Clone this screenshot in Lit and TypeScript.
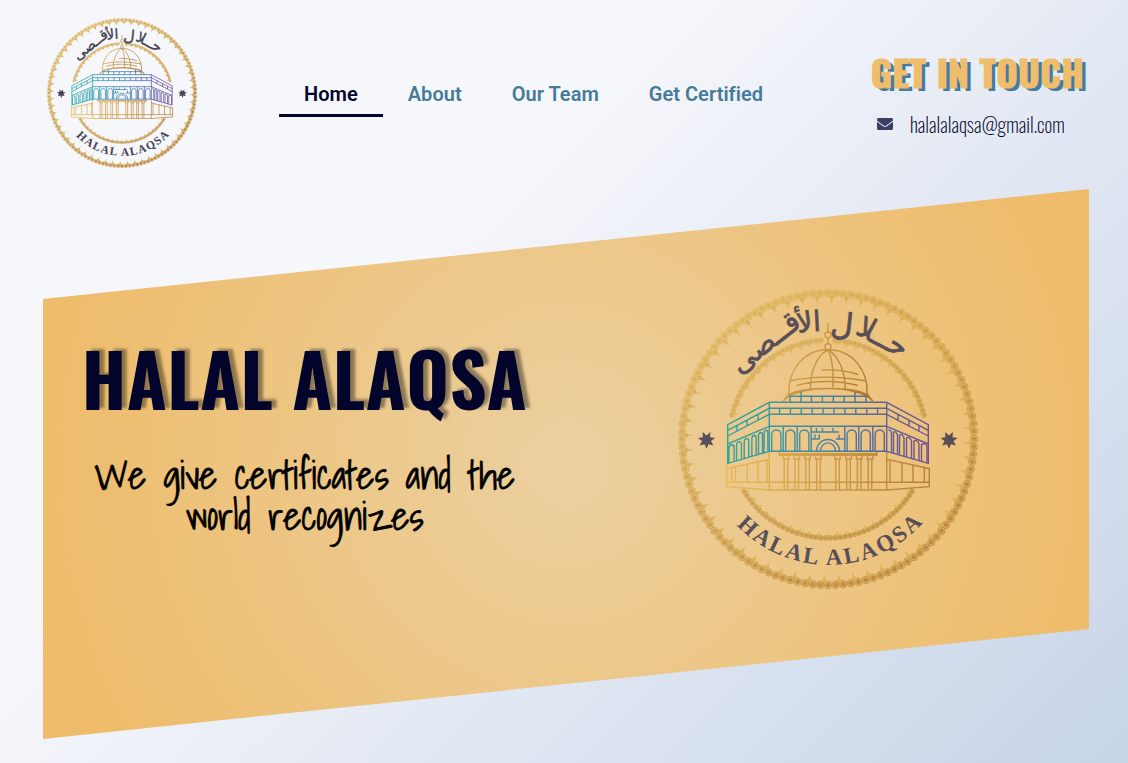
import { LitElement, html, svg, css } from "lit";
import { customElement, property } from "lit/decorators.js";

const rad = (deg: number) => (deg * Math.PI) / 180;

/** Beads along an arc, with a small spike towards the centre on every second one. */
function beads(r: number, from: number, to: number, count: number, size: number, spike: number) {
  const out = [];
  for (let i = 0; i < count; i++) {
    const a = from + ((to - from) * i) / (to - from === 360 ? count : count - 1);
    const x = 150 + r * Math.cos(rad(a));
    const y = 150 + r * Math.sin(rad(a));
    out.push(svg`<circle cx=${x} cy=${y} r=${size} fill-opacity="0.3" stroke-width="0.8"/>
      <circle cx=${x} cy=${y} r=${size * 0.62} stroke="none"/>`);
    if (i % 2 === 0) {
      const b = a + (to - from) / count / 2;
      out.push(svg`<path transform="translate(150 150) rotate(${b})" stroke="none"
        d="M${r - size * 0.5} ${-size * 0.3} L${r - size * 1.3} ${-size * 0.6} L${r - size * 1.8} ${-size * 0.2} L${r - spike} 0 L${r - size * 1.8} ${size * 0.2} L${r - size * 1.3} ${size * 0.6} L${r - size * 0.5} ${size * 0.3}Z"/>`);
    }
  }
  return out;
}

function arch(cx: number, w: number, top = 141, bottom = 162.3) {
  const h = w / 2;
  return `M${cx - h} ${bottom}V${top + h}a${h} ${h} 0 0 1 ${w} 0V${bottom}`;
}

function lines(pts: number[][]) {
  return pts.map(([a, b, c, d]) => `M${a} ${b}L${c} ${d}`).join("");
}

const sideY = (x: number, far: number, near: number) => far + ((near - far) * (x - 49.7)) / 41.6;

/** Left wing of the building; the right wing is its mirror image. */
function wingBlue() {
  let d = "M91.3 113.3L49.7 135.7V174.3L91.3 162.3M49.7 141.3L91.3 119.3M49.7 147L91.3 125.3M49.7 155L91.3 137.3";
  for (const x of [59, 69, 80]) d += `M${x} ${sideY(x, 141.3, 119.3)}V${sideY(x, 147, 125.3)}`;
  for (const x of [53.5, 61, 68.5, 76, 82.5, 88]) {
    const t = sideY(x, 155, 137.3) + 3;
    const b = sideY(x, 174.3, 162.3);
    const w = 2.6 - (x - 53) * 0.02;
    d += `M${x - w} ${b + 0.6}V${t + 3}Q${x - w} ${t} ${x} ${t - 0.6}Q${x + w} ${t - 0.6} ${x + w} ${t + 2}V${b - 0.6}`;
  }
  return d;
}

const WING_GOLD =
  "M91.3 170.3L48.7 179.5V197.7L91.3 201V162.5M48.7 174.5V180M48.7 193.3H91.3" +
  lines([[53.7, 178.5, 53.7, 193.3], [57.5, 177.7, 57.5, 193.3], [69.3, 175, 69.3, 193.3], [80, 173, 80, 193.3], [89, 171, 89, 193.3]]);

function frontBlue() {
  let d = "M91.3 113.3H208.7M91.3 119.3H208.7M91.3 125.3H208.7M91.3 137.3H208.7M91.3 162.3H208.7M91.3 113.3V162.3M208.7 113.3V162.3M112 113.3V107.3H188V113.3M123 103V113.3M177 103V113.3";
  for (let x = 133.5; x < 170; x += 10.9) d += `M${x} 107.3V113.3`;
  for (let x = 101.5; x < 205; x += 10.9) d += `M${x} 119.3V125.3`;
  for (const x of [98.3, 112.3, 126.3, 173.7, 187.7, 201.7]) d += arch(x, 9.2);
  for (const x of [105.2, 119.2, 133.2, 166.8, 180.8, 194.8]) d += `M${x} 137.3V162.3`;
  d += "M133.2 143H161M133.2 150H142M158 150H166.8M138.5 139V143M144.5 139V143M155 139V143M137 145.5V150M141.3 145.5V150M161 145.5V150";
  d += "M138.5 162.3A11.3 11.6 0 0 1 161.5 162.3M142.3 162.3A7.7 8.4 0 0 1 157.7 162.3";
  return d;
}

function columns() {
  let d = "M91.3 193.3H208.7M91.3 201H208.7M101 164.8H199M101 163V166.3H199V163";
  for (const x of [108, 118.8, 129.5, 140.5, 159.5, 170.5, 181.2, 192]) {
    d += `M${x - 2.8} 166.3V170H${x + 2.8}V166.3M${x - 1.8} 170V201M${x + 1.8} 170V201`;
  }
  return d;
}

const DOME =
  "M105.3 112C108 108 110.5 106 111 104C110 82 125 60.7 150 60.7C175 60.7 190 82 189 104C189.500 106 192 108 194.700 112" +
  "M105.300 112C118 95.500 182 95.500 194.700 112M110 106.500C122 97 178 97 190 106.500" +
  "M132.500 99.500C132 82 140 65 150 61M155 98.500C155.500 82 154 68 150 61M167.300 99.500C167 82 160 66 150 61" +
  "M112.500 91.700C130 88 152 85.500 187 91.700M118.500 96.500C135 92 156 90.500 180 96.500M144 81C156 80.500 170 82 180 85.500";

/** Lettering of the upper arc: text, x, y, rotation, size. */
const ARABIC: [string, number, number, number, number][] = [
  ["حــلا", 200, 57, 28, 30],
  ["ل", 163, 46, 6, 31],
  ["ا", 139.500, 42, -3, 28],
  ["لأ", 128, 43, -8, 28],
  ["قــصى", 93, 61, -38, 29],
];

@customElement("halal-seal")
export class HalalSeal extends LitElement {
  @property() ink = "#454252";

  static styles = css`
    :host { display: block; }
    svg { display: block; width: 100%; height: 100%; overflow: visible; }
    .latin { font: 700 23px "Liberation Serif", serif; }
    .arabic { font-family: "DejaVu Sans", sans-serif; text-anchor: middle; stroke-width: 0.7; }
  `;

  render() {
    return html`<svg viewBox="0 0 300 300" aria-label="Halal Alaqsa">
      <defs>
        <linearGradient id="gold" gradientUnits="userSpaceOnUse" x1="40" y1="20" x2="240" y2="290">
          <stop offset="0" stop-color="#dfb659"/><stop offset="0.45" stop-color="#cb9c46"/><stop offset="1" stop-color="#b27c2e"/>
        </linearGradient>
        <linearGradient id="dome" gradientUnits="userSpaceOnUse" x1="105" y1="60" x2="195" y2="112">
          <stop offset="0" stop-color="#d6a548"/><stop offset="1" stop-color="#a0661d"/>
        </linearGradient>
        <linearGradient id="base" gradientUnits="userSpaceOnUse" x1="48" y1="0" x2="252" y2="0">
          <stop offset="0" stop-color="#e9b848"/><stop offset="0.4" stop-color="#cf9b43"/><stop offset="1" stop-color="#aa732b"/>
        </linearGradient>
        <linearGradient id="sea" gradientUnits="userSpaceOnUse" x1="49" y1="0" x2="251" y2="0">
          <stop offset="0" stop-color="#10a3a0"/><stop offset="0.5" stop-color="#2b78ad"/><stop offset="0.75" stop-color="#3c57a2"/><stop offset="1" stop-color="#60399a"/>
        </linearGradient>
        <path id="curve" d="M58.500 236 A127 127 0 0 0 250 228"/>
      </defs>
      <g fill="url(#gold)" stroke="url(#gold)">
        ${beads(146, 0, 360, 120, 3.7, 11.5)}
        ${beads(99, 194, 266, 26, 2.4, 6.8)}
        ${beads(99, 274, 346, 26, 2.4, 6.8)}
        ${beads(99, 32, 148, 42, 2.4, 6.8)}
      </g>
      <g fill="none" stroke="url(#base)" stroke-width="1.4">
        <path d=${WING_GOLD}/><path d=${columns()}/>
        <path d="M208.7 170.3L251.3 179.5V197.7L208.7 201V162.5M208.7 193.3H251.3M246.300 178.500V193.300M235 176V193.300M224 173.500V193.300M212 171V193.300"/>
      </g>
      <g fill="none" stroke="url(#dome)" stroke-width="1.4">
        <path d=${DOME}/><path d="M150 34V43M150 49V55"/><circle cx="150" cy="46" r="3"/><circle cx="150" cy="57.700" r="3"/>
      </g>
      <g fill="none" stroke="url(#sea)" stroke-width="1.4">
        <path d=${frontBlue()}/><path d=${wingBlue()}/>
        <path d="M208.700 113.300L250.300 135.700V174.300L208.700 162.300M250.300 141.300L208.700 119.300M250.300 147L208.700 125.300M250.300 155L208.700 137.300M241 136.400V142.200M231 131.100V137M220 125.300V131.200"/>
        <path d="M249 173V157Q247 153.500 243.500 155.500V172M241 171.500V155Q239 150 236 152V170M233.500 169.500V151.500Q231 147 228.500 149V168M226 167.500V149Q224 144 221.500 146V166M219.500 165.500V146Q217.500 141.500 215.500 143V164M213.500 164V143.500Q212 140 210.500 141.500"/>
      </g>
      <g fill=${this.ink}>
        ${[28.5, 271].map((x) => svg`<path transform="translate(${x} 151)" d=${
          Array.from({ length: 14 }, (_, i) => {
            const r = i % 2 ? 4.6 : 8.8;
            const a = rad(90 + (i * 360) / 14);
            return `${i ? "L" : "M"}${(r * Math.cos(a)).toFixed(2)} ${(r * Math.sin(a)).toFixed(2)}`;
          }).join("") + "Z"}/>`)}
        <text class="latin"><textPath href="#curve" textLength="209">HALAL ALAQSA</textPath></text>
        ${ARABIC.map(([t, x, y, a, s]) => svg`<text class="arabic" stroke=${this.ink} font-size=${s}
          transform="translate(${x} ${y}) rotate(${a})">${t}</text>`)}
      </g>
    </svg>`;
  }
}

@customElement("app-root")
export class AppRoot extends LitElement {
  static styles = css`
    :host {
      display: block; box-sizing: border-box; width: 100%; height: 763px; overflow: hidden;
      padding: 18px 39px 0 43px; font-family: Roboto, sans-serif;
      background: linear-gradient(135deg, #f6f7fb 0%, #f6f7fb 35%, #c7d4e8 100%);
    }
    header { display: flex; height: 171px; }
    .small { width: 150px; height: 150px; margin-left: 4px; }
    nav { display: flex; margin: 56px 0 0 82px; height: 43px; }
    nav a {
      box-sizing: border-box; padding: 0 25px; height: 43px; line-height: 40px;
      font-size: 20px; font-weight: 600; letter-spacing: 0.03px; color: #457b98;
      border-bottom: 3px solid transparent; white-space: nowrap;
    }
    nav a.on { color: #02042c; border-color: #02042c; }
    .contact { margin-left: auto; width: 219px; padding-top: 35px; }
    .contact h2 {
      margin: 0; padding-left: 1px; font: 700 36px/37px Oswald, sans-serif; letter-spacing: 0.9px; white-space: nowrap;
      color: #efbd6c; -webkit-text-stroke: 1.2px #efbd6c; text-shadow: 4px 3px 0 #457b9d;
    }
    .mail { display: flex; align-items: center; gap: 10px; margin-top: 19px; }
    .dot { display: grid; place-items: center; width: 30px; height: 30px; border-radius: 50%; background: #e9edf6; }
    .mail span { font: 200 20px/30px Oswald, sans-serif; color: #02042c; letter-spacing: 0.03px; }
    .hero {
      display: flex; width: 1046px; height: 550px;
      clip-path: polygon(0 20%, 100% 0, 100% 80%, 0 100%);
      background: radial-gradient(circle at 50% 50%, #ebd0a0 0%, #eebc6a 90%);
    }
    .words { width: 523px; box-sizing: border-box; padding: 152px 0 0 0; text-align: center; }
    h1 {
      margin: 0; font: 700 73px/73px Oswald, sans-serif; color: #02042c; letter-spacing: 0.35px;
      text-shadow: 5px -2px 3px rgba(0, 0, 0, 0.4); white-space: nowrap;
    }
    .words p {
      margin: 41px auto 0; font: 400 38.700px/41px "Shadows Into Light", cursive; color: #000;
      -webkit-text-stroke: 0.8px #000; white-space: nowrap;
    }
    .big { width: 300px; height: 300px; margin: 100px 0 0 112px; opacity: 0.85; }
  `;

  render() {
    return html`
      <header>
        <halal-seal class="small"></halal-seal>
        <nav><a class="on">Home</a><a>About</a><a>Our Team</a><a>Get Certified</a></nav>
        <div class="contact">
          <h2>GET IN TOUCH</h2>
          <div class="mail">
            <div class="dot"><svg width="16" height="16" viewBox="0 0 512 512" fill="#3c3f64"><path d="M502.300 190.800c3.900-3.100 9.700-.2 9.700 4.700V400c0 26.500-21.500 48-48 48H48c-26.500 0-48-21.500-48-48V195.600c0-5 5.700-7.800 9.700-4.700 22.400 17.400 52.100 39.500 154.100 113.600 21.100 15.400 56.700 47.800 92.200 47.600 35.700.3 72-32.800 92.300-47.600 102-74.100 131.600-96.300 154-113.700zM256 320c23.200.4 56.600-29.200 73.400-41.400 132.700-96.300 142.800-104.700 173.400-128.700 5.800-4.500 9.200-11.500 9.200-18.900v-19c0-26.500-21.500-48-48-48H48c-26.500 0-48 21.500-48 48v19c0 7.400 3.400 14.300 9.200 18.900 30.600 23.900 40.700 32.400 173.400 128.700 16.800 12.200 50.200 41.800 73.400 41.400z"/></svg></div>
            <span>halalalaqsa@gmail.com</span>
          </div>
        </div>
      </header>
      <section class="hero">
        <div class="words">
          <h1>HALAL ALAQSA</h1>
          <p>We give certificates and the<br>world recognizes</p>
        </div>
        <halal-seal class="big" ink="#3f3a50"></halal-seal>
      </section>`;
  }
}
